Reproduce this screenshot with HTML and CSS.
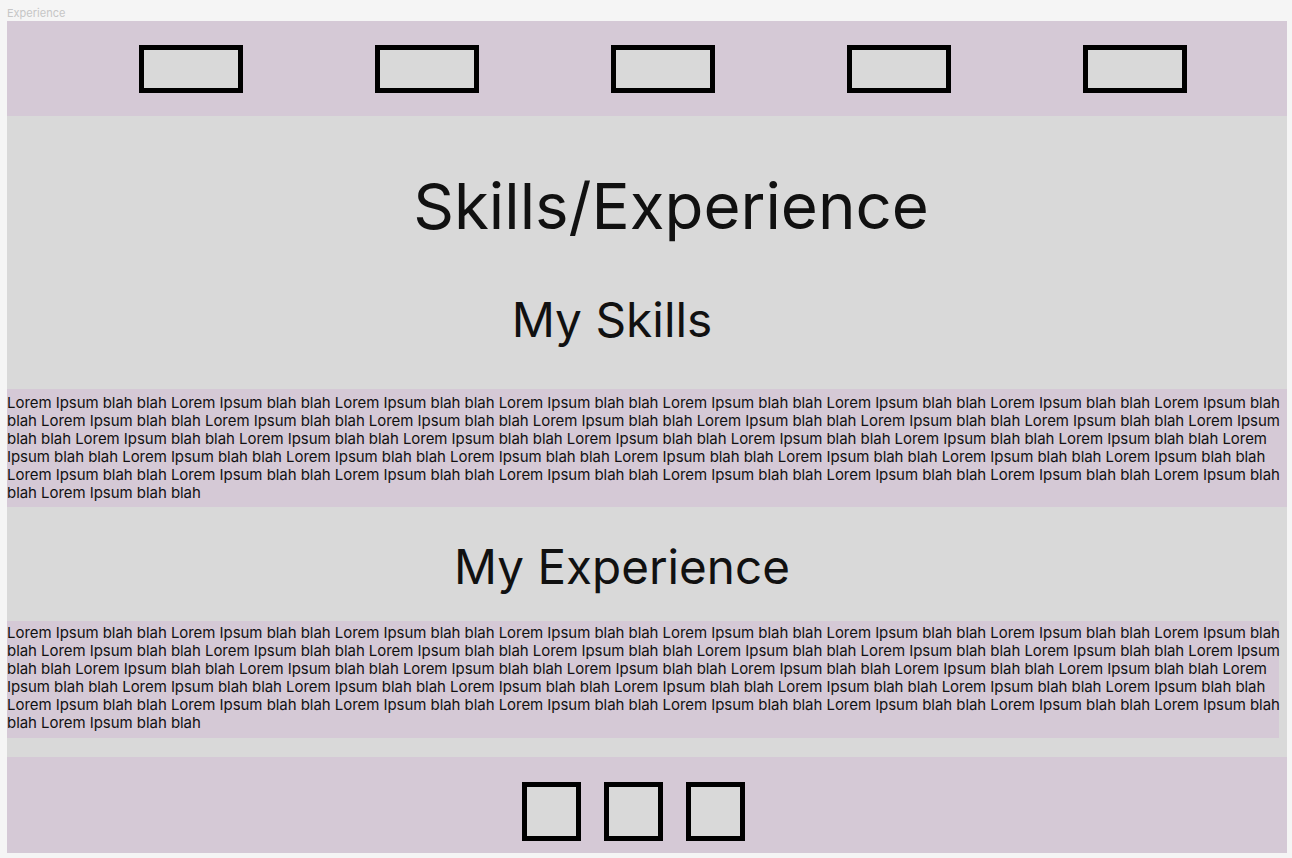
FILE: index.html
```html
<!DOCTYPE html>
<html lang="en">
<head>
<meta charset="utf-8">
<title>Experience</title>
<link rel="stylesheet" href="styles.css">
</head>
<body>
<div class="frame-label">Experience</div>
<div class="frame">
  <header class="topnav">
    <div class="nav-box"></div>
    <div class="nav-box"></div>
    <div class="nav-box"></div>
    <div class="nav-box"></div>
    <div class="nav-box"></div>
  </header>
  <main class="content">
    <h1 class="title">Skills/Experience</h1>
    <h2 class="heading heading-skills">My Skills</h2>
    <div class="para-bg para-skills">
      <p class="para">Lorem Ipsum blah blah Lorem Ipsum blah blah Lorem Ipsum blah blah Lorem Ipsum blah blah Lorem Ipsum blah blah Lorem Ipsum blah blah Lorem Ipsum blah blah Lorem Ipsum blah blah Lorem Ipsum blah blah Lorem Ipsum blah blah Lorem Ipsum blah blah Lorem Ipsum blah blah Lorem Ipsum blah blah Lorem Ipsum blah blah Lorem Ipsum blah blah Lorem Ipsum blah blah Lorem Ipsum blah blah Lorem Ipsum blah blah Lorem Ipsum blah blah Lorem Ipsum blah blah Lorem Ipsum blah blah Lorem Ipsum blah blah Lorem Ipsum blah blah Lorem Ipsum blah blah Lorem Ipsum blah blah Lorem Ipsum blah blah Lorem Ipsum blah blah Lorem Ipsum blah blah Lorem Ipsum blah blah Lorem Ipsum blah blah Lorem Ipsum blah blah Lorem Ipsum blah blah Lorem Ipsum blah blah Lorem Ipsum blah blah Lorem Ipsum blah blah Lorem Ipsum blah blah Lorem Ipsum blah blah Lorem Ipsum blah blah Lorem Ipsum blah blah Lorem Ipsum blah blah</p>
    </div>
    <h2 class="heading heading-exp">My Experience</h2>
    <div class="para-bg para-exp">
      <p class="para">Lorem Ipsum blah blah Lorem Ipsum blah blah Lorem Ipsum blah blah Lorem Ipsum blah blah Lorem Ipsum blah blah Lorem Ipsum blah blah Lorem Ipsum blah blah Lorem Ipsum blah blah Lorem Ipsum blah blah Lorem Ipsum blah blah Lorem Ipsum blah blah Lorem Ipsum blah blah Lorem Ipsum blah blah Lorem Ipsum blah blah Lorem Ipsum blah blah Lorem Ipsum blah blah Lorem Ipsum blah blah Lorem Ipsum blah blah Lorem Ipsum blah blah Lorem Ipsum blah blah Lorem Ipsum blah blah Lorem Ipsum blah blah Lorem Ipsum blah blah Lorem Ipsum blah blah Lorem Ipsum blah blah Lorem Ipsum blah blah Lorem Ipsum blah blah Lorem Ipsum blah blah Lorem Ipsum blah blah Lorem Ipsum blah blah Lorem Ipsum blah blah Lorem Ipsum blah blah Lorem Ipsum blah blah Lorem Ipsum blah blah Lorem Ipsum blah blah Lorem Ipsum blah blah Lorem Ipsum blah blah Lorem Ipsum blah blah Lorem Ipsum blah blah Lorem Ipsum blah blah</p>
    </div>
  </main>
  <footer class="footer">
    <div class="foot-box"></div>
    <div class="foot-box"></div>
    <div class="foot-box"></div>
  </footer>
</div>
</body>
</html>
```

FILE: styles.css
```css
* { box-sizing: border-box; }
html, body { margin: 0; padding: 0; }
body {
  background: #f5f5f5;
  font-family: Inter, "Noto Sans", sans-serif;
  color: #111;
}
.frame-label {
  height: 21px;
  padding: 7px 0 0 7px;
  font-size: 11px;
  line-height: 13px;
  color: #c6c6c6;
}
.frame {
  margin-left: 7px;
  width: 1280px;
}
.topnav {
  height: 95px;
  background: #d5c9d6;
  display: flex;
  align-items: center;
  padding-left: 132px;
  gap: 132px;
}
.nav-box {
  width: 104px;
  height: 48px;
  border: 5px solid #000;
  background: #d9d9d9;
}
.content {
  background: #d9d9d9;
  padding: 51px 0 19px;
  display: flex;
  flex-direction: column;
}
.title {
  margin: 0;
  font-size: 63.6px;
  font-weight: 400;
  line-height: 77px;
  text-align: center;
  padding-left: 48px;
}
.heading {
  margin: 0;
  font-weight: 400;
  text-align: center;
}
.heading-skills {
  margin-top: 47px;
  font-size: 47.8px;
  line-height: 58px;
  padding-right: 70px;
}
.heading-exp {
  margin-top: 31px;
  font-size: 47.6px;
  line-height: 58px;
  padding-right: 50px;
}
.para-bg {
  background: #d5c9d6;
}
.para-skills {
  margin-top: 40px;
  width: 1280px;
  height: 118px;
  padding-top: 5px;
}
.para-exp {
  margin-top: 25px;
  width: 1272px;
  height: 117px;
  padding-top: 3px;
}
.para {
  margin: 0;
  width: 1280px;
  font-size: 15px;
  line-height: 18px;
  letter-spacing: -0.05px;
}
.footer {
  height: 96px;
  background: #d5c9d6;
  display: flex;
  justify-content: center;
  align-items: flex-start;
  gap: 23px;
  padding: 25px 28px 0 0;
}
.foot-box {
  width: 59px;
  height: 59px;
  border: 5px solid #000;
  background: #d9d9d9;
}
```
